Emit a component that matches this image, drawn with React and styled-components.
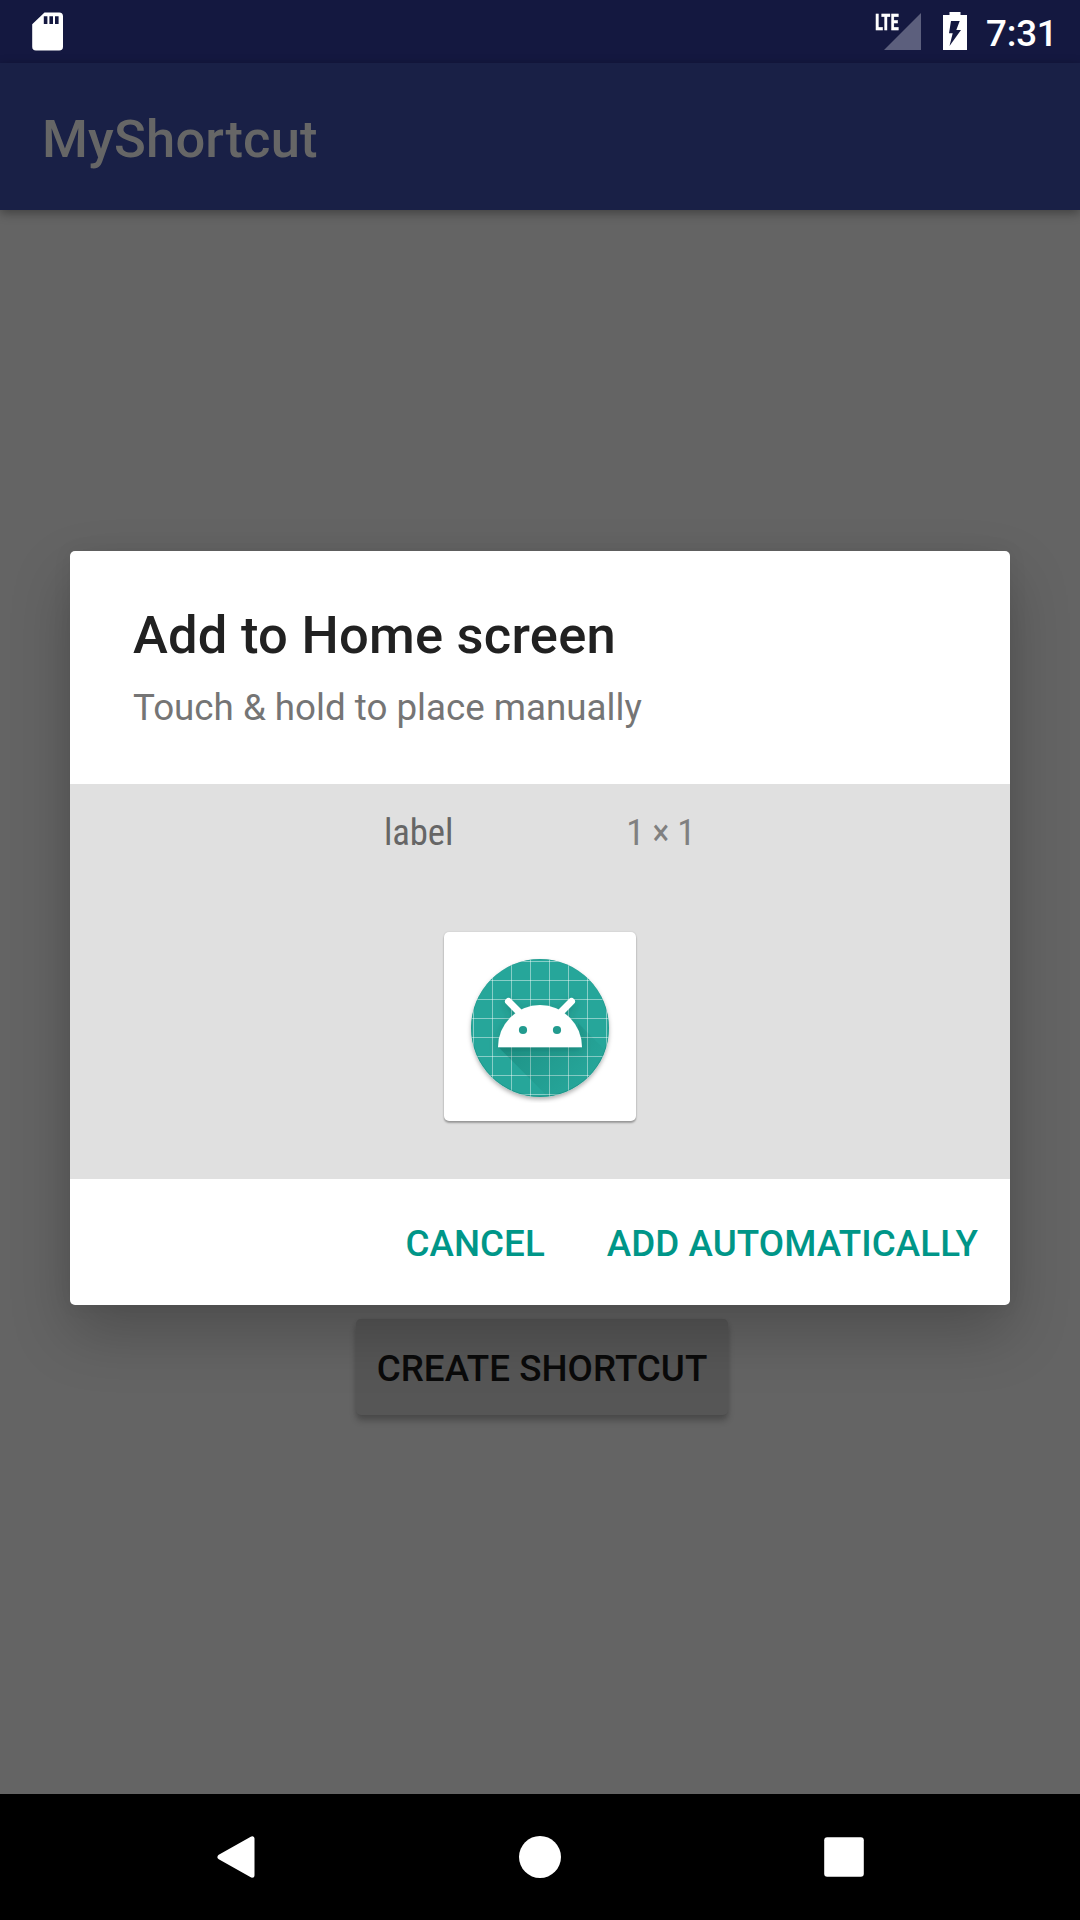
import React from "react";
import styled, { createGlobalStyle } from "styled-components";

const GlobalStyle = createGlobalStyle`
  *, *::before, *::after { box-sizing: border-box; }
  body { margin: 0; font-family: Roboto, "Liberation Sans", sans-serif; }
  button { font: inherit; border: 0; padding: 0; background: none; }
`;

const Screen = styled.div`
  position: relative;
  display: flex;
  flex-direction: column;
  width: 1080px;
  height: 1920px;
  overflow: hidden;
  background: #646464;
`;

const StatusBar = styled.header`
  display: flex;
  align-items: flex-start;
  justify-content: space-between;
  height: 63px;
  padding: 12px 25px 0 32px;
  background: #141840;
  color: #fff;
`;

const StatusGroup = styled.div`
  display: flex;
  align-items: flex-start;
`;

const Network = styled.div`
  display: flex;
  align-items: flex-start;
  margin-right: 22px;
`;

const NetworkType = styled.span`
  width: 9px;
  font-family: "Roboto Condensed", Roboto, sans-serif;
  font-size: 22.5px;
  font-weight: 700;
  line-height: 22px;
  transform: scaleX(0.75);
  transform-origin: left center;
  margin-top: -1px;
  -webkit-text-stroke: 0.4px #fff;
`;

const Clock = styled.time`
  margin-left: 19px;
  width: 69px;
  font-size: 36.75px;
  font-weight: 500;
  letter-spacing: -0.2px;
  line-height: 44px;
`;

const AppBar = styled.div`
  position: relative;
  display: flex;
  align-items: center;
  height: 147px;
  padding: 5px 42px 0;
  background: #192046;
  box-shadow: 0 3px 10px rgba(0, 0, 0, 0.36);
`;

const AppTitle = styled.h1`
  margin: 0;
  color: #666;
  font-size: 52.5px;
  font-weight: 500;
  letter-spacing: 0.2px;
  line-height: 62px;
`;

const Content = styled.main`
  flex: 1;
  display: flex;
  justify-content: center;
  align-items: flex-start;
  padding: 1109px 0 0 4px;
`;

const CreateButton = styled.button`
  && {
    width: 372px;
    height: 96px;
    padding-top: 2px;
    border-radius: 5px;
    background: #565656;
    color: #0a0a0a;
    font-size: 36.75px;
    font-weight: 500;
    letter-spacing: 0.04px;
    box-shadow: 0 6px 6px rgba(0, 0, 0, 0.22), 0 1px 4px rgba(0, 0, 0, 0.1);
  }
`;

const NavBar = styled.nav`
  display: flex;
  align-items: center;
  justify-content: space-between;
  height: 126px;
  padding: 0 216px;
  background: #000;
`;

const Overlay = styled.div`
  position: absolute;
  inset: 63px 0 126px;
  display: flex;
  align-items: center;
  justify-content: center;
  overflow: hidden;
`;

const Dialog = styled.section`
  width: 940px;
  height: 754px;
  margin-bottom: 1px;
  display: flex;
  flex-direction: column;
  border-radius: 5px;
  overflow: hidden;
  background: #fff;
  box-shadow: 0 28px 60px rgba(0, 0, 0, 0.22), 0 0 20px rgba(0, 0, 0, 0.06);
`;

const DialogHeader = styled.div`
  height: 233px;
  padding: 53px 63px 0;
`;

const DialogTitle = styled.h2`
  margin: 0 0 20px;
  color: #212121;
  font-size: 52.5px;
  font-weight: 500;
  letter-spacing: 0.24px;
  line-height: 62px;
`;

const DialogText = styled.p`
  margin: 0;
  color: #757575;
  font-size: 36.75px;
  letter-spacing: -0.01px;
  line-height: 44px;
`;

const Preview = styled.div`
  height: 395px;
  padding-top: 27px;
  display: flex;
  flex-direction: column;
  align-items: center;
  gap: 77px;
  background: #e0e0e0;
`;

const PreviewMeta = styled.div`
  display: flex;
  justify-content: space-between;
  width: 312px;
  height: 44px;
  padding-right: 1px;
`;

const MetaText = styled.span`
  color: ${(p) => p.$color};
  font-family: "Roboto Condensed", Roboto, sans-serif;
  font-size: 36.75px;
  letter-spacing: ${(p) => p.$tracking};
  line-height: 44px;
  white-space: pre;
`;

const WidgetCard = styled.div`
  display: flex;
  align-items: center;
  justify-content: center;
  width: 192px;
  height: 189px;
  padding-top: 3px;
  border-radius: 5px;
  background: #fff;
  box-shadow: 0 2px 2px rgba(0, 0, 0, 0.3), 0 0 2px rgba(0, 0, 0, 0.14);
`;

const Actions = styled.div`
  flex: 1;
  display: flex;
  align-items: center;
  justify-content: flex-end;
  gap: 62px;
  padding: 4px 32px 0 0;
`;

const ActionButton = styled.button`
  && {
    color: #009688;
    font-size: 36.75px;
    font-weight: 500;
    letter-spacing: 0.06px;
    line-height: 44px;
    white-space: nowrap;
  }
`;

const SdCardIcon = () => (
  <svg width="31" height="39" viewBox="0 0 31 39">
    <path fill="#fff" fillRule="evenodd" d="M12.5 0.5H27.2Q31 .5 31 4.3V34.8Q31 38.6 27.2 38.6H4Q.2 38.6 .2 34.8V12.2ZM11.8 4.2V12H15.4V4.2ZM17.4 4.2V12H21V4.2ZM23 4.2V12H26.6V4.2Z" />
  </svg>
);

const SignalIcon = () => (
  <svg width="37" height="38" viewBox="0 0 37 38">
    <path fill="#5c5f7d" d="M37 1V38H0Z" />
  </svg>
);

const BatteryIcon = () => (
  <svg width="24" height="38" viewBox="0 0 24 38">
    <path fill="#fff" d="M6.5 0H17.5V3H24V38H0V3H6.5Z" />
    <path fill="#141840" d="M8 9H16.7L13.3 18H18L6.5 34L9.7 21.3H6Z" />
  </svg>
);

const GRID = [-66.5, -47.5, -28.5, -9.5, 9.5, 28.5, 47.5, 66.5];

const AndroidIcon = () => (
  <svg width="150" height="150" viewBox="-75 -75 150 150">
    <defs>
      <clipPath id="disc"><circle r="69" /></clipPath>
      <linearGradient id="cast" gradientUnits="userSpaceOnUse" x1="-20" y1="0" x2="40" y2="60">
        <stop offset="0" stopColor="#004d40" stopOpacity="0.22" />
        <stop offset="1" stopColor="#004d40" stopOpacity="0" />
      </linearGradient>
      <filter id="discShadow" x="-20%" y="-20%" width="140%" height="140%">
        <feDropShadow dx="0" dy="2.5" stdDeviation="2" floodColor="#000" floodOpacity="0.3" />
      </filter>
      <filter id="headShadow" x="-20%" y="-20%" width="140%" height="160%">
        <feDropShadow dx="0" dy="3" stdDeviation="4" floodColor="#00382f" floodOpacity="0.25" />
      </filter>
    </defs>
    <circle r="69" fill="#26a69a" filter="url(#discShadow)" />
    <g clipPath="url(#disc)">
      {GRID.map((v) => (
        <path key={v} d={`M${v} -70V70M-70 ${v}H70`} stroke="#fff" strokeOpacity="0.5" strokeWidth="0.9" />
      ))}
      <path fill="url(#cast)" d="M-41.5 19.3L12 73H75V32L38 -5V19.3Z" />
      <circle cy="-0.4" r="68.8" fill="none" stroke="#00695c" strokeOpacity="0.3" strokeWidth="0.8" />
      <g filter="url(#headShadow)">
        <path d="M-31.5 -26.6L-20 -15M31.5 -26.6L20 -15" stroke="#fff" strokeWidth="7" strokeLinecap="round" />
        <path fill="#fff" d="M-42 19.3A42 42.3 0 0 1 42 19.3Z" />
      </g>
      <circle cx="-17" cy="2" r="4.1" fill="#229b8f" />
      <circle cx="17" cy="2" r="4.1" fill="#229b8f" />
    </g>
  </svg>
);

const BackIcon = () => (
  <svg width="40" height="44" viewBox="0 0 40 44">
    <path fill="#fff" stroke="#fff" strokeWidth="5" strokeLinejoin="round" d="M36 3.8V40.2L4 22Z" />
  </svg>
);

const HomeIcon = () => (
  <svg width="44" height="44" viewBox="0 0 44 44">
    <circle cx="22" cy="22" r="21" fill="#fff" />
  </svg>
);

const RecentsIcon = () => (
  <svg width="40" height="40" viewBox="0 0 40 40">
    <rect x="0.2" y="0.2" width="39.6" height="39.6" rx="3" fill="#fff" />
  </svg>
);

export default function App() {
  return (
    <>
      <GlobalStyle />
      <Screen>
        <StatusBar>
          <SdCardIcon />
          <StatusGroup>
            <Network>
              <NetworkType>LTE</NetworkType>
              <SignalIcon />
            </Network>
            <BatteryIcon />
            <Clock>7:31</Clock>
          </StatusGroup>
        </StatusBar>
        <AppBar>
          <AppTitle>MyShortcut</AppTitle>
        </AppBar>
        <Content>
          <CreateButton>CREATE SHORTCUT</CreateButton>
        </Content>
        <NavBar>
          <BackIcon />
          <HomeIcon />
          <RecentsIcon />
        </NavBar>
        <Overlay>
          <Dialog role="dialog">
            <DialogHeader>
              <DialogTitle>Add to Home screen</DialogTitle>
              <DialogText>Touch &amp; hold to place manually</DialogText>
            </DialogHeader>
            <Preview>
              <PreviewMeta>
                <MetaText $color="#666" $tracking="-0.1px">label</MetaText>
                <MetaText $color="#808080" $tracking="-0.35px">1 × 1</MetaText>
              </PreviewMeta>
              <WidgetCard>
                <AndroidIcon />
              </WidgetCard>
            </Preview>
            <Actions>
              <ActionButton>CANCEL</ActionButton>
              <ActionButton>ADD AUTOMATICALLY</ActionButton>
            </Actions>
          </Dialog>
        </Overlay>
      </Screen>
    </>
  );
}
